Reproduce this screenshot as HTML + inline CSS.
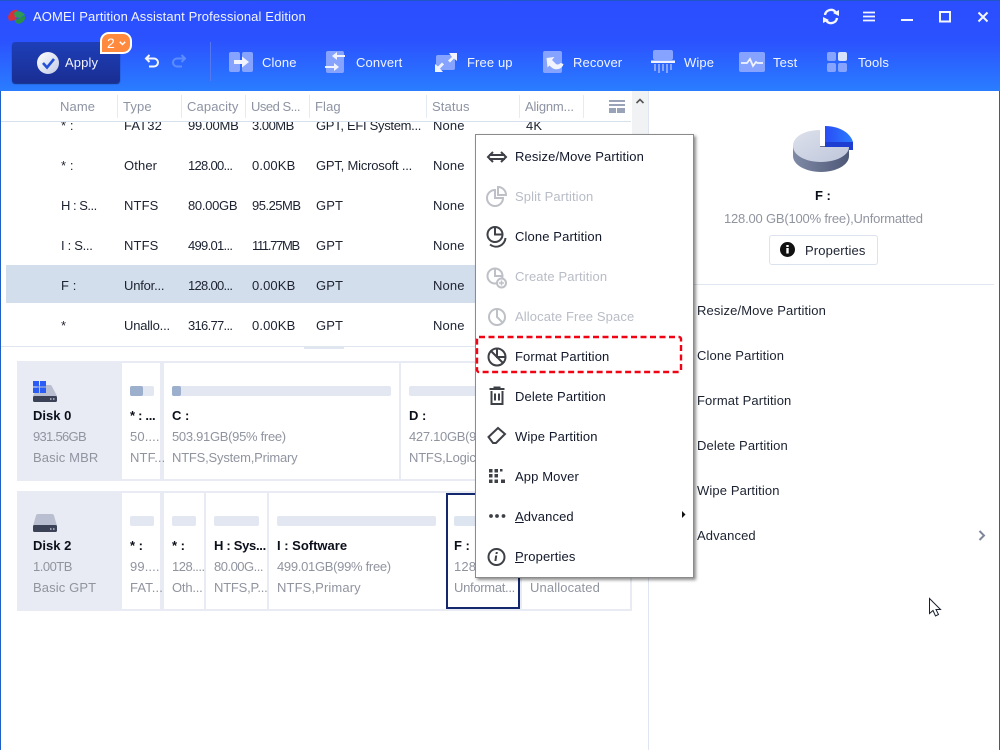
<!DOCTYPE html>
<html><head><meta charset="utf-8"><style>
*{box-sizing:border-box}
html,body{margin:0;padding:0;background:#fff}
body{width:1000px;height:750px;position:relative;overflow:hidden;font-family:"Liberation Sans",sans-serif;font-size:13px;letter-spacing:.12px}
.t{position:absolute;white-space:nowrap;height:16px;line-height:16px}
.w{color:#f2f5ff}
.h{color:#8d93a3}
.d{color:#1c2230}
.g{color:#90949f}
.b{color:#0b0f1a;font-weight:bold;letter-spacing:0}
.m{color:#12182a}
.x{color:#b8bcc6}
.a{position:absolute}
.n2{letter-spacing:-.2px}
.n3{letter-spacing:-.3px}
.n5{letter-spacing:-.5px}
.n7{letter-spacing:-.7px}
.n13{letter-spacing:-1.3px}
.sep{position:absolute;top:95px;width:1px;height:23px;background:#e6eaf2}
.card{position:absolute;left:17px;width:615px;height:120px;background:#e8ebf3}
.cell{position:absolute;background:#fff;height:116px;top:2px}
.bar{position:absolute;height:10px;background:#e3e7f1;border-radius:2px}
svg{position:absolute;overflow:visible}
</style></head><body>

<div class="a" style="left:0;top:0;width:1000px;height:91px;background:linear-gradient(#2b4dff 0,#2b52ff 45%,#2a7dff 100%)"></div>
<div class="a" style="left:0;top:0;width:1000px;height:1px;background:#1f57c6"></div>

<svg style="left:7px;top:8px" width="20" height="18" viewBox="0 0 20 18"><path d="M1 9C2 4 7 1 11 2L9 12 2 13Z" fill="#d5313a"/><path d="M7 5C10 2 15 3 18 7L13 10 8 9Z" fill="#2f9a55"/><path d="M8 12L18 8C19 12 16 15 11 16 9 15 8 14 8 12Z" fill="#2a8f49"/></svg>
<div class="t w" style="left:33px;top:9px">AOMEI Partition Assistant Professional Edition</div>

<svg style="left:0;top:0" width="1000" height="90" viewBox="0 0 1000 90" fill="none">
<path d="M825 15a6 6 0 0 1 10.500-3M837 18a6 6 0 0 1-10.500 3" stroke="#f4f6ff" stroke-width="2.400"/>
<path d="M833 13l6-3v6zM829 20l-6 3v-6z" fill="#f4f6ff"/>
<path d="M863 12.500h12M863 16.500h12M863 20.500h12" stroke="#f4f6ff" stroke-width="1.800"/>
<path d="M901 20h12" stroke="#f4f6ff" stroke-width="2"/>
<rect x="940" y="12" width="10" height="9.500" stroke="#f4f6ff" stroke-width="2"/>
<path d="M978.500 12.500l9 9M987.500 12.500l-9 9" stroke="#f4f6ff" stroke-width="2"/>
</svg>

<div class="a" style="left:12px;top:42px;width:108px;height:41px;border-radius:3px;background:linear-gradient(#1d3fb8,#1a2e93);box-shadow:0 1px 1px #16307f"></div>
<svg style="left:37px;top:52px" width="22" height="22" viewBox="0 0 22 22"><defs><linearGradient id="c" x1="0" y1="0" x2="1" y2="1"><stop offset="0" stop-color="#fff"/><stop offset="1" stop-color="#c2cbe6"/></linearGradient></defs><circle cx="11" cy="11" r="11" fill="url(#c)"/><path d="M6 11l4 4.500 7-8.500" fill="none" stroke="#2450d8" stroke-width="2.600"/></svg>
<div class="t w" style="left:65px;top:55px">Apply</div>
<div class="a" style="left:100px;top:32px;width:32px;height:22px;background:#ff8a3e;border:2px solid #fff;border-radius:9px 9px 9px 0"></div>
<div class="t" style="left:107px;top:35px;color:#fff;font-size:14px;">2</div>
<svg style="left:119px;top:41px" width="8" height="6" fill="none"><path d="M.800.800l2.700 2.700L6.200.800" stroke="#fff" stroke-width="1.500"/></svg>

<svg style="left:144px;top:54px" width="16" height="14" fill="none"><path d="M2 4.500h8a4 4 0 0 1 0 8H5" stroke="#f4f6ff" stroke-width="2"/><path d="M5.500 1L2 4.500 5.500 8" stroke="#f4f6ff" stroke-width="2"/></svg>
<svg style="left:171px;top:54px" width="16" height="14" fill="none"><path d="M14 4.500H6a4 4 0 0 0 0 8h5" stroke="#5c8cff" stroke-width="2"/><path d="M10.500 1L14 4.500 10.500 8" stroke="#5c8cff" stroke-width="2"/></svg>
<div class="a" style="left:210px;top:42px;width:1px;height:39px;background:#5578f0"></div>

<svg style="left:229px;top:52px" width="24" height="20"><rect width="11" height="20" rx="2" fill="#86a4ff"/><rect x="13" width="11" height="20" rx="2" fill="#86a4ff"/><path d="M5 8h8V4.500l7 5.500-7 5.500V12H5z" fill="#f1f4ff"/></svg>
<div class="t w" style="left:262px;top:55px">Clone</div>
<svg style="left:325px;top:51px" width="21" height="22"><rect x="1" width="18" height="22" rx="2" fill="#86a4ff"/><path d="M20 4H12V1L7 5l5 4V6h8zM0 15h9v-3l5 4-5 4v-3H0z" fill="#f1f4ff"/></svg>
<div class="t w" style="left:356px;top:55px">Convert</div>
<svg style="left:435px;top:53px" width="22" height="19"><rect x="1" y="2" width="19" height="15" rx="2" fill="#86a4ff"/><path d="M14 0h8v8l-3-2.500-4 4-2-2 4-3.500zM0 19v-8l3 2.500 4-4 2 2-4 4 3 3.500z" fill="#f1f4ff"/></svg>
<div class="t w" style="left:467px;top:55px">Free up</div>
<svg style="left:543px;top:51px" width="22" height="22"><rect width="19" height="22" rx="2" fill="#86a4ff"/><path d="M3.500 7l8-1-2.500 3 4 4c1.500 1 3 .500 4.500-1l3 1c-1 4-5 6-9 5-2-.500-3.500-2-5-3.500l-2 2z" fill="#f1f4ff"/></svg>
<div class="t w" style="left:573px;top:55px">Recover</div>
<svg style="left:651px;top:50px" width="24" height="24"><rect x="2" width="20" height="10" rx="2" fill="#86a4ff"/><rect y="10.500" width="24" height="2.500" fill="#f1f4ff"/><path d="M3 14h2v7H3zM7 14h2v9H7zM11 14h2v7h-2zM15 14h2v9h-2zM19 14h2v6h-2z" fill="#86a4ff"/></svg>
<div class="t w" style="left:684px;top:55px">Wipe</div>
<svg style="left:739px;top:52px" width="26" height="20" fill="none"><rect width="26" height="20" rx="2" fill="#86a4ff"/><path d="M2 11h6l3-4 3 7 3-4 1.500 1H24" stroke="#f1f4ff" stroke-width="1.800"/></svg>
<div class="t w" style="left:773px;top:55px">Test</div>
<svg style="left:827px;top:52px" width="20" height="20"><rect width="9" height="9" rx="2" fill="#86a4ff"/><rect x="11" width="9" height="9" rx="2" fill="#d9e2fb"/><rect y="11" width="9" height="9" rx="2" fill="#86a4ff"/><rect x="11" y="11" width="9" height="9" rx="2" fill="#86a4ff"/></svg>
<div class="t w" style="left:858px;top:55px">Tools</div>

<div class="a" style="left:0;top:91px;width:1px;height:659px;background:#1f5fc8"></div>
<div class="a" style="left:999px;top:91px;width:1px;height:659px;background:#1f5fc8"></div>

<!-- Table -->
<div class="t h" style="left:60px;top:99px">Name</div>
<div class="t h" style="left:123px;top:99px">Type</div>
<div class="t h" style="left:187px;top:99px">Capacity</div>
<div class="t h n5" style="left:251px;top:99px">Used S...</div>
<div class="t h" style="left:315px;top:99px">Flag</div>
<div class="t h" style="left:432px;top:99px">Status</div>
<div class="t h n2" style="left:525px;top:99px">Alignm...</div>
<div class="sep" style="left:117px"></div><div class="sep" style="left:181px"></div><div class="sep" style="left:245px"></div><div class="sep" style="left:309px"></div><div class="sep" style="left:426px"></div><div class="sep" style="left:519px"></div><div class="sep" style="left:583px"></div>
<svg style="left:609px;top:100px" width="16" height="13"><path d="M0 0h16v2H0zM0 4h16v2H0z" fill="#98a3b8"/><path d="M0 8h7v5H0zM8 8h8v5H8z" fill="#98a3b8"/></svg>

<div class="a" style="left:632px;top:91px;width:16px;height:255px;background:#f1f2f4"></div>
<svg style="left:636px;top:98px" width="8" height="6" fill="none"><path d="M.500 5L4 1.500 7.500 5" stroke="#555" stroke-width="1.600"/></svg>

<div class="a" style="left:6px;top:265px;width:626px;height:38px;background:#d3deec"></div>
<div class="a" style="left:1px;top:121px;width:630px;height:225px;overflow:hidden">
<div class="t d" style="left:60px;top:-3px">* :</div><div class="t d" style="left:123px;top:-3px">FAT32</div><div class="t d n2" style="left:187px;top:-3px">99.00MB</div><div class="t d n5" style="left:251px;top:-3px">3.00MB</div><div class="t d n3" style="left:315px;top:-3px">GPT, EFI System...</div><div class="t d" style="left:432px;top:-3px">None</div><div class="t d" style="left:525px;top:-3px">4K</div>
<div class="t d" style="left:60px;top:37px">* :</div><div class="t d" style="left:123px;top:37px">Other</div><div class="t d n7" style="left:187px;top:37px">128.00...</div><div class="t d" style="left:251px;top:37px">0.00KB</div><div class="t d n2" style="left:315px;top:37px">GPT, Microsoft ...</div><div class="t d" style="left:432px;top:37px">None</div>
<div class="t d n5" style="left:60px;top:77px">H : S...</div><div class="t d" style="left:123px;top:77px">NTFS</div><div class="t d n3" style="left:187px;top:77px">80.00GB</div><div class="t d n5" style="left:251px;top:77px">95.25MB</div><div class="t d" style="left:315px;top:77px">GPT</div><div class="t d" style="left:432px;top:77px">None</div>
<div class="t d n3" style="left:60px;top:117px">I : S...</div><div class="t d" style="left:123px;top:117px">NTFS</div><div class="t d n7" style="left:187px;top:117px">499.01...</div><div class="t d n13" style="left:251px;top:117px">111.77MB</div><div class="t d" style="left:315px;top:117px">GPT</div><div class="t d" style="left:432px;top:117px">None</div>
<div class="t d" style="left:60px;top:157px">F :</div><div class="t d n2" style="left:123px;top:157px">Unfor...</div><div class="t d n7" style="left:187px;top:157px">128.00...</div><div class="t d" style="left:251px;top:157px">0.00KB</div><div class="t d" style="left:315px;top:157px">GPT</div><div class="t d" style="left:432px;top:157px">None</div>
<div class="t d" style="left:60px;top:197px">*</div><div class="t d n2" style="left:123px;top:197px">Unallo...</div><div class="t d n7" style="left:187px;top:197px">316.77...</div><div class="t d" style="left:251px;top:197px">0.00KB</div><div class="t d" style="left:315px;top:197px">GPT</div><div class="t d" style="left:432px;top:197px">None</div>
</div>
<div class="a" style="left:1px;top:121px;width:630px;height:1px;background:#d7e1ee"></div>
<div class="a" style="left:1px;top:346px;width:647px;height:1px;background:#dfe6f0"></div>
<div class="a" style="left:304px;top:347px;width:40px;height:2px;background:#e1e7f1"></div>

<!-- Disk 0 -->
<div class="card" style="top:361px">
<div class="cell" style="left:105px;width:38px"></div>
<div class="cell" style="left:147px;width:235px"></div>
<div class="cell" style="left:384px;width:229px"></div>
</div>
<svg style="left:33px;top:381px" width="24" height="21"><path d="M5 4h12q1.500 0 2 1.500L24 15v3H0v-3z" fill="#b9bfd0"/><rect y="15" width="24" height="6" rx="1.500" fill="#3b4258"/><path d="M17 18h1.500M20 18h1.500" stroke="#fff"/><rect width="6" height="5.500" x="0" fill="#2c5cf6"/><rect width="6" height="5.500" x="7" fill="#2c5cf6"/><rect width="6" height="5.500" x="0" y="6.500" fill="#2c5cf6"/><rect width="6" height="5.500" x="7" y="6.500" fill="#2c5cf6"/></svg>
<div class="t b" style="left:33px;top:408px">Disk 0</div>
<div class="t g n7" style="left:33px;top:429px">931.56GB</div>
<div class="t g" style="left:33px;top:450px">Basic MBR</div>
<div class="bar" style="left:130px;top:386px;width:24px"></div><div class="bar" style="left:130px;top:386px;width:13px;background:#9cafcd"></div>
<div class="bar" style="left:172px;top:386px;width:219px"></div><div class="bar" style="left:172px;top:386px;width:9px;background:#9cafcd"></div>
<div class="bar" style="left:409px;top:386px;width:70px"></div>
<div class="t b n3" style="left:130px;top:408px">* : ...</div><div class="t g" style="left:130px;top:429px">50....</div><div class="t g" style="left:130px;top:450px">NTF...</div>
<div class="t b" style="left:172px;top:408px">C :</div><div class="t g n3" style="left:172px;top:429px">503.91GB(95% free)</div><div class="t g n2" style="left:172px;top:450px">NTFS,System,Primary</div>
<div class="t b" style="left:409px;top:408px">D :</div><div class="t g n3" style="left:409px;top:429px">427.10GB(95% free)</div><div class="t g n2" style="left:409px;top:450px">NTFS,Logical</div>

<!-- Disk 2 -->
<div class="card" style="top:491px">
<div class="cell" style="left:105px;width:38px"></div>
<div class="cell" style="left:147px;width:40px"></div>
<div class="cell" style="left:189px;width:61px"></div>
<div class="cell" style="left:252px;width:177px"></div>
<div class="cell" style="left:429px;width:74px;border:2px solid #14286e"></div>
<div class="cell" style="left:505px;width:108px"></div>
</div>
<svg style="left:33px;top:514px" width="24" height="18"><path d="M5 0h14q1.500 0 2 1.500L24 12v2H0v-2L3 1.500Q3.500 0 5 0z" fill="#b9bfd0"/><rect y="11" width="24" height="7" rx="1.500" fill="#3b4258"/><path d="M17 15h1.500M20 15h1.500" stroke="#fff"/></svg>
<div class="t b" style="left:33px;top:538px">Disk 2</div>
<div class="t g n5" style="left:33px;top:559px">1.00TB</div>
<div class="t g" style="left:33px;top:580px">Basic GPT</div>
<div class="bar" style="left:130px;top:516px;width:24px"></div>
<div class="bar" style="left:172px;top:516px;width:24px"></div>
<div class="bar" style="left:214px;top:516px;width:45px"></div>
<div class="bar" style="left:277px;top:516px;width:159px"></div>
<div class="bar" style="left:454px;top:516px;width:58px;background:#dde5f0"></div>
<div class="bar" style="left:530px;top:516px;width:92px"></div>
<div class="t b" style="left:130px;top:538px">* :</div><div class="t g" style="left:130px;top:559px">99....</div><div class="t g" style="left:130px;top:580px">FAT...</div>
<div class="t b" style="left:172px;top:538px">* :</div><div class="t g n5" style="left:172px;top:559px">128....</div><div class="t g n2" style="left:172px;top:580px">Oth...</div>
<div class="t b n3" style="left:214px;top:538px">H : Sys...</div><div class="t g n5" style="left:214px;top:559px">80.00G...</div><div class="t g n2" style="left:214px;top:580px">NTFS,P...</div>
<div class="t b" style="left:277px;top:538px">I : Software</div><div class="t g n3" style="left:277px;top:559px">499.01GB(99% free)</div><div class="t g" style="left:277px;top:580px">NTFS,Primary</div>
<div class="t b" style="left:454px;top:538px">F :</div><div class="t g" style="left:454px;top:559px">128.00GB</div><div class="t g n3" style="left:454px;top:580px">Unformat...</div>
<div class="t g" style="left:530px;top:580px">Unallocated</div>

<!-- Right panel -->
<div class="a" style="left:648px;top:91px;width:1px;height:659px;background:#dfe6f0"></div>
<svg style="left:793px;top:126px" width="60" height="50" viewBox="0 0 60 50">
<defs><linearGradient id="p1" x1="0" y1="0" x2="1" y2="1"><stop offset="0" stop-color="#dde1ec"/><stop offset="1" stop-color="#bec6da"/></linearGradient>
<linearGradient id="p2" x1="0" y1="0" x2="1" y2="0"><stop offset="0" stop-color="#7f8aa6"/><stop offset="1" stop-color="#4e5877"/></linearGradient>
<linearGradient id="p3" x1="0" y1="0" x2="1" y2="0"><stop offset="0" stop-color="#2a4cf5"/><stop offset="1" stop-color="#2a7dff"/></linearGradient></defs>
<path d="M0 20v10c0 9 13 16 28 16s28-7 28-16V20z" fill="url(#p2)"/>
<path d="M27 4C11 4 0 11 0 20s12 16 28 16 28-7 28-15H27z" fill="url(#p1)"/>
<path d="M32 0c13 0 25 6 28 16H32z" fill="url(#p3)"/>
<path d="M32 16h28v8h-4v-3H32z" fill="#1d3ed0"/>
</svg>
<div class="t b" style="left:815px;top:188px">F :</div>
<div class="t g n2" style="left:724px;top:211px">128.00 GB(100% free),Unformatted</div>
<div class="a" style="left:769px;top:235px;width:109px;height:30px;border:1px solid #dbe3ee;border-radius:3px"></div>
<svg style="left:780px;top:242px" width="15" height="15"><circle cx="7.500" cy="7.500" r="7.500" fill="#111"/><rect x="6.300" y="6" width="2.400" height="5.500" fill="#fff"/><rect x="6.300" y="3" width="2.400" height="2" fill="#fff"/></svg>
<div class="t d" style="left:805px;top:243px">Properties</div>
<div class="a" style="left:649px;top:284px;width:345px;height:1px;background:#e1e7f1"></div>
<div class="t d" style="left:697px;top:303px">Resize/Move Partition</div>
<div class="t d" style="left:697px;top:348px">Clone Partition</div>
<div class="t d" style="left:697px;top:393px">Format Partition</div>
<div class="t d" style="left:697px;top:438px">Delete Partition</div>
<div class="t d" style="left:697px;top:483px">Wipe Partition</div>
<div class="t d" style="left:697px;top:528px">Advanced</div>
<svg style="left:978px;top:530px" width="8" height="11" fill="none"><path d="M1.500 1l4.500 4.500L1.500 10" stroke="#80879a" stroke-width="2"/></svg>
<svg style="left:929px;top:598px" width="14" height="20"><path d="M.500.500v15l3.500-3 2.500 5.500 3-1.500-2.500-5h4.500z" fill="#fff" stroke="#1a2030"/></svg>

<!-- Menu -->
<div class="a" style="left:475px;top:134px;width:219px;height:444px;background:#fff;border:1px solid #8b8b8b;box-shadow:2px 2px 3px rgba(0,0,0,.45)"></div>
<svg style="left:475px;top:134px" width="219" height="444" fill="none" stroke-width="2">
<g stroke="#3d4046">
<path d="M18 18l-5 5 5 5M26 18l5 5-5 5M14 21h16M14 25h16"/>
<circle cx="20" cy="100.500" r="7.500"/><path d="M20 93v7.500h7.500"/><path d="M15 110.500a9.500 9.500 0 0 0 15.500-6.500"/>
<circle cx="22" cy="223" r="8.500"/><path d="M16 217l12 12M22 214.500V223h8.500"/>
<path d="M14.500 255h15M19.500 255v-1.500h5v1.500M16.500 257v13h11v-13M20 259.500v7M24 259.500v7"/>
<path d="M13.500 303L23 294l7 6-9 9h-3z"/>
<circle cx="21.500" cy="423" r="8"/>
</g>
<g stroke="#bdc0c6">
<path d="M20 56a8 8 0 1 0 8 8h-8z"/><path d="M23 53a8 8 0 0 1 8 8h-8z"/>
<circle cx="20" cy="142" r="7.500"/><path d="M20 135v7h7"/><circle cx="26.500" cy="149" r="4.500" fill="#fff"/><path d="M24 149h5M26.500 146.500v5" stroke-width="1.500"/>
<circle cx="22" cy="183" r="8"/><path d="M22 175v8l5.500 5.500"/>
</g>
<g fill="#3d4046" stroke="none">
<rect x="14" y="335" width="3.500" height="3.500"/><rect x="19.500" y="335" width="3.500" height="3.500"/><rect x="25" y="335" width="2.500" height="2.500"/>
<rect x="14" y="340" width="3.500" height="3.500"/><rect x="19.500" y="340" width="3.500" height="3.500"/>
<rect x="14" y="345.500" width="3.500" height="3.500"/><rect x="19.500" y="345.500" width="3.500" height="3.500"/><rect x="26" y="345.500" width="4" height="3.500"/>
<circle cx="16" cy="382" r="1.900"/><circle cx="22" cy="382" r="1.900"/><circle cx="28.500" cy="382" r="1.900"/>
<path d="M20.200 421.500h2l-.8 5.500h-2zM20.800 418h2l-.3 2h-2z"/>
<path d="M207 377v7l3.500-3.500z" fill="#111"/>
</g>
</svg>
<div class="t m" style="left:515px;top:149px">Resize/Move Partition</div>
<div class="t x" style="left:515px;top:189px">Split Partition</div>
<div class="t m" style="left:515px;top:229px">Clone Partition</div>
<div class="t x" style="left:515px;top:269px">Create Partition</div>
<div class="t x" style="left:515px;top:309px">Allocate Free Space</div>
<div class="t m" style="left:515px;top:349px">Format Partition</div>
<div class="t m" style="left:515px;top:389px">Delete Partition</div>
<div class="t m" style="left:515px;top:429px">Wipe Partition</div>
<div class="t m" style="left:515px;top:469px">App Mover</div>
<div class="t m" style="left:515px;top:509px"><u>A</u>dvanced</div>
<div class="t m" style="left:515px;top:549px"><u>P</u>roperties</div>
<svg style="left:475px;top:335px" width="208" height="40" fill="none"><rect x="2" y="2" width="204" height="35" rx="2" stroke="#f00313" stroke-width="2.400" stroke-dasharray="6 3.500"/></svg>

</body></html>
